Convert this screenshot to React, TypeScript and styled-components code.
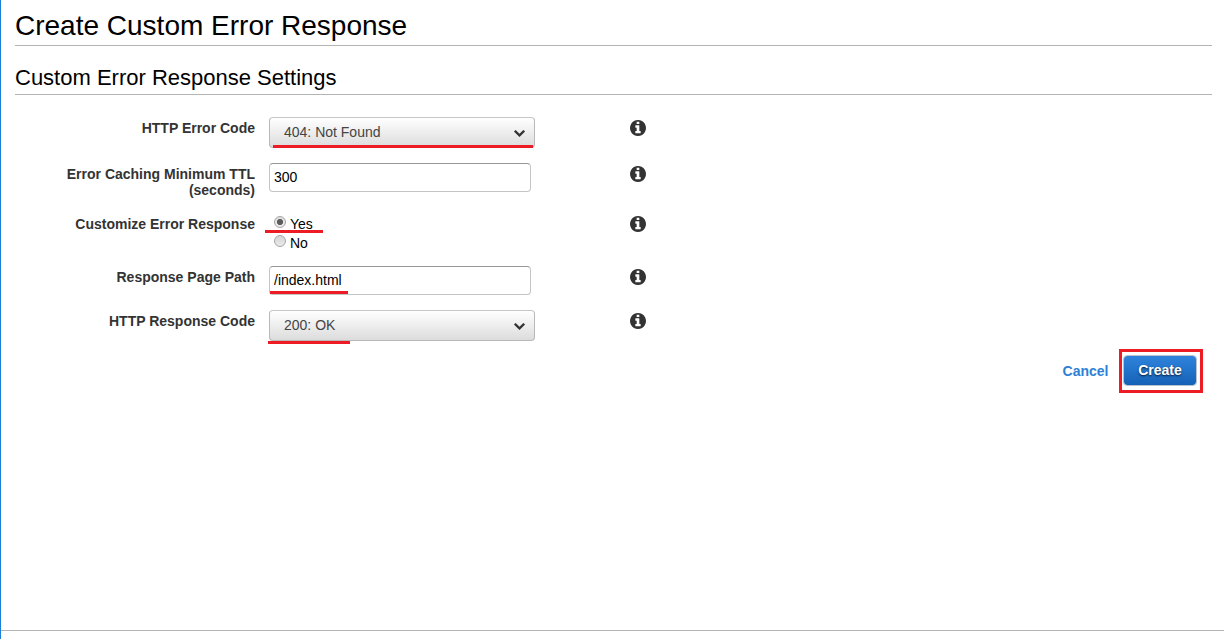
import React from "react";
import styled, { createGlobalStyle } from "styled-components";

const GlobalStyle = createGlobalStyle`
  *, *::before, *::after { box-sizing: border-box; }
  body { margin: 0; background: #fff; color: #000; font-family: "Liberation Sans", Arial, sans-serif; }
  h1, h2 { margin: 0; font-weight: 400; }
`;

const Page = styled.div`
  display: flex;
  flex-direction: column;
  height: 639px;
  overflow: hidden;
  border-left: 1px solid #1b80d8;
`;

const Main = styled.main`
  flex: 1;
  padding: 0 12px 0 14px;
`;

const Footer = styled.footer`
  height: 9px;
  border-top: 1px solid #b4b4b4;
`;

const Title = styled.h1`
  height: 46px;
  padding-top: 10px;
  border-bottom: 1px solid #b4b4b4;
  font-size: 28px;
  line-height: 32px;
  white-space: nowrap;
`;

const Subtitle = styled.h2`
  height: 49px;
  padding-top: 19px;
  border-bottom: 1px solid #b4b4b4;
  font-size: 22px;
  line-height: 25px;
  white-space: nowrap;
`;

const Form = styled.form`
  padding-top: 22px;
`;

const Row = styled.div<{ $height: number }>`
  display: grid;
  grid-template-columns: 240px 266px 16px;
  column-gap: 14px;
  height: ${(p) => p.$height}px;
  align-items: start;
`;

const Label = styled.label`
  padding-top: 3px;
  color: #333;
  font-size: 14px;
  font-weight: 700;
  line-height: 16px;
  text-align: right;
`;

const Control = styled.div`
  position: relative;
`;

const SelectBox = styled.div`
  display: flex;
  align-items: center;
  justify-content: space-between;
  width: 266px;
  height: 31px;
  padding: 0 9px 1px 14px;
  border: 1px solid #b8b8b8;
  border-top-color: #c6c6c6;
  border-radius: 4px;
  background: linear-gradient(#fff, #dcdcdc);
  color: #444;
  font-size: 14px;
  line-height: 16px;
  svg { display: block; margin-top: 3px; }
`;

const TextInput = styled.input`
  display: block;
  width: 262px;
  height: 29px;
  padding: 0 4px 2px;
  border: 1px solid #c4c4c4;
  border-top-color: #979797;
  border-radius: 4px;
  outline: none;
  background: #fff;
  color: #000;
  font: 14px "Liberation Sans", Arial, sans-serif;
`;

const Radios = styled.div`
  display: flex;
  flex-direction: column;
  padding: 3px 0 0 5px;
`;

const RadioOption = styled.label`
  display: flex;
  align-items: flex-start;
  gap: 4px;
  height: 19px;
  font-size: 14px;
  line-height: 16px;
`;

const Radio = styled.i<{ $checked?: boolean }>`
  width: 12px;
  height: 12px;
  border: 1px solid #a6a6a6;
  border-radius: 50%;
  background: ${(p) =>
    p.$checked
      ? "radial-gradient(circle at 5px 5px, #5c5c5c 0 2.7px, transparent 3.5px), linear-gradient(#dedede, #ececec)"
      : "linear-gradient(#d6d6d6, #eaeaea)"};
`;

const Info = styled.span`
  display: block;
  margin: 3px 0 0 81px;
  svg { display: block; }
`;

const Underline = styled.span<{ $left: number; $top: number; $width: number }>`
  position: absolute;
  left: ${(p) => p.$left}px;
  top: ${(p) => p.$top}px;
  width: ${(p) => p.$width}px;
  height: 3px;
  background: #ed1c24;
`;

const Actions = styled.div`
  display: flex;
  align-items: center;
  justify-content: flex-end;
  gap: 10.5px;
  height: 44px;
  padding-right: 9px;
`;

const Cancel = styled.a`
  color: #2e7fd6;
  font-size: 14px;
  font-weight: 700;
`;

const Highlight = styled.div`
  width: 84px;
  height: 44px;
  padding: 3px 1px 1px;
  border: 3px solid #ed1c24;
`;

const CreateButton = styled.button`
  display: block;
  width: 74px;
  height: 31px;
  padding: 0 0 1px;
  border: 1px solid #b9c3cf;
  border-radius: 4px;
  background: linear-gradient(#2f83dc, #1562b7);
  background-clip: padding-box;
  color: #fff;
  font: 700 14px "Liberation Sans", Arial, sans-serif;
  text-shadow: 0 1px 2px rgba(0, 0, 0, 0.8);
`;

const InfoIcon = () => (
  <Info>
    <svg width="16" height="16" viewBox="128 128 1536 1536" fill="#333">
      <path d="M1152 1376v-160q0-14-9-23t-23-9h-96v-512q0-14-9-23t-23-9h-320q-14 0-23 9t-9 23v160q0 14 9 23t23 9h96v320h-96q-14 0-23 9t-9 23v160q0 14 9 23t23 9h448q14 0 23-9t9-23zm-128-896v-160q0-14-9-23t-23-9h-192q-14 0-23 9t-9 23v160q0 14 9 23t23 9h192q14 0 23-9t9-23zm640 416q0 209-103 385.5t-279.5 279.5-385.5 103-385.5-103-279.5-279.5-103-385.5 103-385.5 279.5-279.5 385.5-103 385.5 103 279.5 279.5 103 385.5z" />
    </svg>
  </Info>
);

const Select = ({ value }: { value: string }) => (
  <SelectBox>
    <span>{value}</span>
    <svg width="11" height="7" viewBox="90 533 1612 1035" fill="#333">
      <path d="M1683 808l-742 741q-19 19-45 19t-45-19l-742-741q-19-19-19-45.5t19-45.5l166-165q19-19 45-19t45 19l531 531 531-531q19-19 45-19t45 19l166 165q19 19 19 45.5t-19 45.5z" />
    </svg>
  </SelectBox>
);

export default function App() {
  return (
    <>
      <GlobalStyle />
      <Page>
        <Main>
          <Title>Create Custom Error Response</Title>
          <Subtitle>Custom Error Response Settings</Subtitle>
          <Form>
            <Row $height={46}>
              <Label>HTTP Error Code</Label>
              <Control>
                <Select value="404: Not Found" />
                <Underline $left={4} $top={28} $width={260} />
              </Control>
              <InfoIcon />
            </Row>
            <Row $height={50}>
              <Label>
                Error Caching Minimum TTL
                <br />
                (seconds)
              </Label>
              <Control>
                <TextInput defaultValue="300" />
              </Control>
              <InfoIcon />
            </Row>
            <Row $height={53}>
              <Label>Customize Error Response</Label>
              <Control>
                <Radios>
                  <RadioOption>
                    <Radio $checked />
                    <span>Yes</span>
                  </RadioOption>
                  <RadioOption>
                    <Radio />
                    <span>No</span>
                  </RadioOption>
                </Radios>
                <Underline $left={-4} $top={17} $width={58} />
              </Control>
              <InfoIcon />
            </Row>
            <Row $height={44}>
              <Label>Response Page Path</Label>
              <Control>
                <TextInput defaultValue="/index.html" />
                <Underline $left={1} $top={25} $width={78} />
              </Control>
              <InfoIcon />
            </Row>
            <Row $height={39}>
              <Label>HTTP Response Code</Label>
              <Control>
                <Select value="200: OK" />
                <Underline $left={-1} $top={31} $width={82} />
              </Control>
              <InfoIcon />
            </Row>
            <Actions>
              <Cancel>Cancel</Cancel>
              <Highlight>
                <CreateButton type="button">Create</CreateButton>
              </Highlight>
            </Actions>
          </Form>
        </Main>
        <Footer />
      </Page>
    </>
  );
}
